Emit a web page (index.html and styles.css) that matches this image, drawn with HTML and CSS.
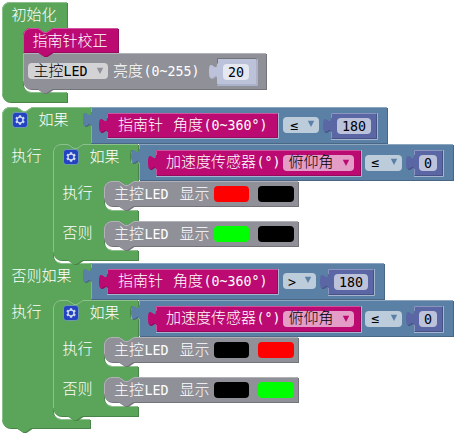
FILE: index.html
```
<!DOCTYPE html>
<html lang="zh-CN">
<head>
<meta charset="utf-8">
<title>积木程序</title>
<link rel="stylesheet" href="styles.css">
</head>
<body>
<svg class="workspace" width="458" height="435" viewBox="0 0 458 435">
  <defs>
    <g id="gear">
      <rect class="gear-box" width="15" height="15" rx="3"/>
      <path class="gear-shape" transform="scale(.94)" fill-rule="evenodd" d="m4.203,7.296 0,1.368 -0.92,0.677 -0.11,0.41 0.9,1.559 0.41,0.11 1.043,-0.457 1.187,0.683 0.127,1.134 0.3,0.3 1.8,0 0.3,-0.299 0.127,-1.138 1.185,-0.682 1.046,0.458 0.409,-0.11 0.9,-1.559 -0.11,-0.41 -0.92,-0.677 0,-1.366 0.92,-0.677 0.11,-0.41 -0.9,-1.559 -0.409,-0.109 -1.046,0.458 -1.185,-0.682 -0.127,-1.138 -0.3,-0.299 -1.8,0 -0.3,0.3 -0.126,1.135 -1.187,0.682 -1.043,-0.457 -0.41,0.11 -0.899,1.559 0.108,0.409z"/>
      <circle class="gear-hole" cx="7.5" cy="7.5" r="2.3"/>
    </g>
    <path id="arrow" d="M.8,.8H7.200L4,7z"/>
    <g id="inner-if">
      <path class="body green" d="M0,8 A8,8 0 0,1 8,0 H15 l6,4 3,0 6,-4 H85 v5 c0,10 -8,-8 -8,7.5 s8,-2.5 8,7.5 V37 H81 l-6,4 -3,0 -6,-4 h-7 a8,8 0 0,0 -8,8 V58 a8,8 0 0,0 8,8 H85 V77 H81 l-6,4 -3,0 -6,-4 h-7 a8,8 0 0,0 -8,8 V98 a8,8 0 0,0 8,8 H85 V116 H29.5 l-6,4 -3,0 -6,-4 H8 a8,8 0 0,1 -8,-8 z"/>
      <path class="edge green-edge" d="M.5,108 V8 A7.5,7.5 0 0,1 8,.5 H15 l6,4 3,0 6,-4 H84.5 M53.5,63.5 a8,8 0 0,0 5.5,3 H84.5 M53.5,103.5 a8,8 0 0,0 5.5,3 H84.5"/>
    </g>
    <g id="led">
      <path class="body gray" d="M0,8 A8,8 0 0,1 8,0 H15 l6,4 3,0 6,-4 H194 V25 H29.5 l-6,4 -3,0 -6,-4 H8 a8,8 0 0,1 -8,-8 z"/>
      <path class="edge gray-edge" d="M.5,17 V8 A7.5,7.5 0 0,1 8,.5 H15 l6,4 3,0 6,-4 H194"/>
    </g>
    <g id="num-180">
      <path class="socket" d="M0,26.5 H46.5 V0"/>
      <path class="body purple" d="M0,0 H45 V25 H0 V20 c0,-10 -8,8 -8,-7.5 s8,2.5 8,-7.5 z"/>
      <path class="edge purple-edge" d="M.5,5 V.5 H45 M.5,25 V19"/>
      <rect class="number" x="6" y="5" width="34" height="16" rx="4"/>
    </g>
    <g id="num-0">
      <path class="socket" d="M0,26.5 H29.5 V0"/>
      <path class="body purple" d="M0,0 H28 V25 H0 V20 c0,-10 -8,8 -8,-7.5 s8,2.5 8,-7.5 z"/>
      <path class="edge purple-edge" d="M.5,5 V.5 H28 M.5,25 V19"/>
      <rect class="number" x="5" y="5" width="18" height="16" rx="4"/>
    </g>
    <g id="compass">
      <path class="socket" d="M0,25.5 H171.5 V0"/>
      <path class="body pink" d="M0,0 H170 V24 H0 V20 c0,-10 -8,8 -8,-7.5 s8,2.5 8,-7.5 z"/>
      <path class="edge pink-edge" d="M.5,5 V.5 H170 M.5,24 V19"/>
    </g>
    <g id="tilt-compare">
      <path class="body blue" d="M0,0 H314 V36 H0 V20 c0,-10 -8,8 -8,-7.5 s8,2.5 8,-7.5 z"/>
      <path class="edge blue-edge" d="M.5,5 V.5 H314 M.5,36 V19"/>
      <path class="socket" d="M17,32.5 H222.5 V6"/>
      <path class="body pink" d="M17,6 H221 V31 H17 V26 c0,-10 -8,8 -8,-7.5 s8,2.5 8,-7.5 z"/>
      <path class="edge pink-edge" d="M17.5,11 V6.5 H221 M17.5,31 V25"/>
      <rect class="pink-field" x="144" y="11" width="71" height="16" rx="4"/>
      <use class="pink" href="#arrow" x="203" y="15"/>
      <rect class="blue-field" x="226" y="11" width="37" height="16" rx="4"/>
      <use class="blue" href="#arrow" x="251" y="14"/>
      <use href="#num-0" x="275" y="6"/>
    </g>
  </defs>

  <!-- 初始化 -->
  <g>
    <path class="body green" transform="translate(2,2)" d="M0,8 A8,8 0 0,1 8,0 H65 V26 H51 l-6,4 -3,0 -6,-4 h-7 a8,8 0 0,0 -8,8 V82 a8,8 0 0,0 8,8 H65 V100 H8 a8,8 0 0,1 -8,-8 z"/>
    <path class="edge green-edge" transform="translate(2,2)" d="M.5,92 V8 A7.5,7.5 0 0,1 8,.5 H65 M24,88 a8,8 0 0,0 5,2.5 H64.5"/>
    <text x="12" y="20.5">初始化</text>
  </g>
  <g>
    <path class="body gray" transform="translate(23,53)" d="M0,0 H243 V36 H29.5 l-6,4 -3,0 -6,-4 H8 a8,8 0 0,1 -8,-8 z"/>
    <path class="edge gray-edge" transform="translate(23,53)" d="M.5,28 V.5 H243"/>
    <path class="body pink" transform="translate(23,28)" d="M0,8 A8,8 0 0,1 8,0 H15 l6,4 3,0 6,-4 H95 V24 H29.5 l-6,4 -3,0 -6,-4 H0 z"/>
    <path class="edge pink-edge" transform="translate(23,28)" d="M.5,24 V8 A7.5,7.5 0 0,1 8,.5 H15 l6,4 3,0 6,-4 H95"/>
    <text x="33" y="46.5">指南针校正</text>
    <rect class="gray-field" x="28" y="63" width="80" height="16" rx="4"/>
    <text class="ink" x="34" y="76.5">主控<tspan class="mono" x="64">LED</tspan></text>
    <use class="gray" href="#arrow" x="96" y="67"/>
    <text x="113.500" y="76.5">亮度<tspan class="mono" x="144">(0~255)</tspan></text>
    <path class="socket" d="M217,85.5 H257.5 V59"/>
    <path class="body lavender" transform="translate(217,59)" d="M0,0 H39 V25 H0 V20 c0,-10 -8,8 -8,-7.5 s8,2.5 8,-7.5 z"/>
    <path class="socket-top" d="M217.500,63.500 V58.500 H256"/>
    <rect class="lavender-field" x="223" y="64" width="26" height="16" rx="4"/>
    <text class="ink mono number-text" x="228" y="77">20</text>
  </g>

  <!-- 如果 / 否则如果 -->
  <g>
    <path class="body green" transform="translate(2,107)" d="M0,8 A8,8 0 0,1 8,0 H15 l6,4 3,0 6,-4 H89 v5 c0,10 -8,-8 -8,7.5 s8,-2.5 8,7.5 V37 H81 l-6,4 -3,0 -6,-4 h-7 a8,8 0 0,0 -8,8 V148 a8,8 0 0,0 8,8 H89 v5 c0,10 -8,-8 -8,7.5 s8,-2.5 8,7.5 V193 H81 l-6,4 -3,0 -6,-4 h-7 a8,8 0 0,0 -8,8 V304 a8,8 0 0,0 8,8 H88 V321 H29.5 l-6,4 -3,0 -6,-4 H8 a8,8 0 0,1 -8,-8 z"/>
    <path class="edge green-edge" transform="translate(2,107)" d="M.5,313 V8 A7.5,7.5 0 0,1 8,.5 H15 l6,4 3,0 6,-4 H88.5 M53.5,153.5 a8,8 0 0,0 5.5,3 H88.5 M53.5,309.5 a8,8 0 0,0 5.5,3 H88"/>
    <use href="#gear" x="12.5" y="112.5"/>
    <text x="39" y="125.5">如果</text>
    <text x="12" y="161.5">执行</text>
    <text x="12" y="281.5">否则如果</text>
    <text x="12" y="317.5">执行</text>
  </g>

  <g>
    <path class="body blue" transform="translate(91,107)" d="M0,0 H296 V36 H0 V20 c0,-10 -8,8 -8,-7.5 s8,2.5 8,-7.5 z"/>
    <path class="edge blue-edge" transform="translate(91,107)" d="M.5,5 V.5 H296 M.5,36 V19"/>
    <use href="#compass" x="107" y="113"/>
    <text x="118.500" y="131">指南针<tspan x="173.500">角度</tspan><tspan class="mono" x="204">(0~360°)</tspan></text>
    <rect class="blue-field" x="283" y="117" width="36" height="16" rx="4"/>
    <text class="ink mono number-text" x="290" y="130">≤</text>
    <use class="blue" href="#arrow" x="307" y="120"/>
    <use href="#num-180" x="331" y="113"/>
    <text class="ink mono number-text" x="342" y="131">180</text>
  </g>
  <g>
    <path class="body blue" transform="translate(91,263)" d="M0,0 H293 V36 H0 V20 c0,-10 -8,8 -8,-7.5 s8,2.5 8,-7.5 z"/>
    <path class="edge blue-edge" transform="translate(91,263)" d="M.5,5 V.5 H293 M.5,36 V19"/>
    <use href="#compass" x="107" y="269"/>
    <text x="118.500" y="287">指南针<tspan x="173.500">角度</tspan><tspan class="mono" x="204">(0~360°)</tspan></text>
    <rect class="blue-field" x="283" y="273" width="33" height="16" rx="4"/>
    <text class="ink mono number-text" x="288" y="287">&gt;</text>
    <use class="blue" href="#arrow" x="304" y="276"/>
    <use href="#num-180" x="328" y="269"/>
    <text class="ink mono number-text" x="339" y="287">180</text>
  </g>

  <!-- 内层条件一 -->
  <g>
    <use href="#inner-if" x="53" y="144"/>
    <use href="#gear" x="63.5" y="149.5"/>
    <text x="90" y="162.5">如果</text>
    <use href="#tilt-compare" x="139" y="144"/>
    <text x="166.500" y="168">加速度传感器<tspan class="mono" x="257">(°)</tspan></text>
    <text class="ink" x="289" y="168">俯仰角</text>
    <text class="ink mono number-text" x="371" y="167">≤</text>
    <text class="ink mono number-text" x="424" y="168">0</text>
    <text x="63" y="198.500">执行</text>
    <use href="#led" x="104" y="181"/>
    <text x="114.500" y="199.500">主控<tspan class="mono" x="145">LED</tspan><tspan x="180">显示</tspan></text>
    <rect class="red" x="214" y="186" width="35" height="16" rx="4"/>
    <rect class="black" x="258" y="186" width="36" height="16" rx="4"/>
    <text x="63" y="238.500">否则</text>
    <use href="#led" x="104" y="221"/>
    <text x="114.500" y="239.500">主控<tspan class="mono" x="145">LED</tspan><tspan x="180">显示</tspan></text>
    <rect class="lime" x="214" y="226" width="35" height="16" rx="4"/>
    <rect class="black" x="258" y="226" width="36" height="16" rx="4"/>
  </g>

  <!-- 内层条件二 -->
  <g transform="translate(0,156)">
    <use href="#inner-if" x="53" y="144"/>
    <use href="#gear" x="63.5" y="149.5"/>
    <text x="90" y="162.5">如果</text>
    <use href="#tilt-compare" x="139" y="144"/>
    <text x="166.500" y="168">加速度传感器<tspan class="mono" x="257">(°)</tspan></text>
    <text class="ink" x="289" y="168">俯仰角</text>
    <text class="ink mono number-text" x="371" y="167">≤</text>
    <text class="ink mono number-text" x="424" y="168">0</text>
    <text x="63" y="198.500">执行</text>
    <use href="#led" x="104" y="181"/>
    <text x="114.500" y="199.500">主控<tspan class="mono" x="145">LED</tspan><tspan x="180">显示</tspan></text>
    <rect class="black" x="214" y="186" width="35" height="16" rx="4"/>
    <rect class="red" x="258" y="186" width="36" height="16" rx="4"/>
    <text x="63" y="238.500">否则</text>
    <use href="#led" x="104" y="221"/>
    <text x="114.500" y="239.500">主控<tspan class="mono" x="145">LED</tspan><tspan x="180">显示</tspan></text>
    <rect class="black" x="214" y="226" width="35" height="16" rx="4"/>
    <rect class="lime" x="258" y="226" width="36" height="16" rx="4"/>
  </g>
</svg>
</body>
</html>
```
FILE: styles.css
```
body {
  margin: 0;
  background: #fff;
  overflow: hidden;
}

.workspace {
  display: block;
}

text {
  font-family: "Noto Sans CJK SC", sans-serif;
  font-size: 15px;
  font-weight: 300;
  fill: #fff;
  transform: translate(-0.5px, -1px);
}

.mono {
  font-family: "DejaVu Sans Mono", monospace;
  font-size: 13.3px;
  font-weight: 400;
}

.number-text {
  transform: none;
}

.ink {
  fill: #000;
}

.green { fill: #5ba55b; --shade: #498449; }
.gray { fill: #909098; --shade: #73737a; }
.pink { fill: #bb0b73; --shade: #96095c; }
.blue { fill: #5b80a5; --shade: #496684; }
.purple { fill: #5b67a5; --shade: #495284; }
.lavender { fill: #bdc2db; --shade: #adb1c5; }

.body {
  filter: drop-shadow(1px 1px 0 var(--shade));
}

.edge {
  fill: none;
  stroke-width: 1;
}

.green-edge { stroke: #8cc08c; }
.gray-edge { stroke: #b1b1b7; }
.pink-edge { stroke: #cf549d; }
.blue-edge { stroke: #8ca6c0; }
.purple-edge { stroke: #8c95c0; }

.socket {
  fill: none;
  stroke: #a5b5cf;
}

.socket-top {
  fill: none;
  stroke: #73737a;
}

.gray-field { fill: #d3d3d6; }
.blue-field { fill: #bdccdb; }
.pink-field { fill: #e49dc7; }
.number { fill: #bdc2db; }
.lavender-field { fill: #e5e7f1; }

.red { fill: #f00; }
.lime { fill: #0f0; }
.black { fill: #000; }

.gear-box {
  fill: #2443c0;
  stroke: #9dbbd0;
  stroke-width: 0.5;
}
.gear-shape { fill: #cfdcf0; }
.gear-hole { fill: #2443c0; }
```
